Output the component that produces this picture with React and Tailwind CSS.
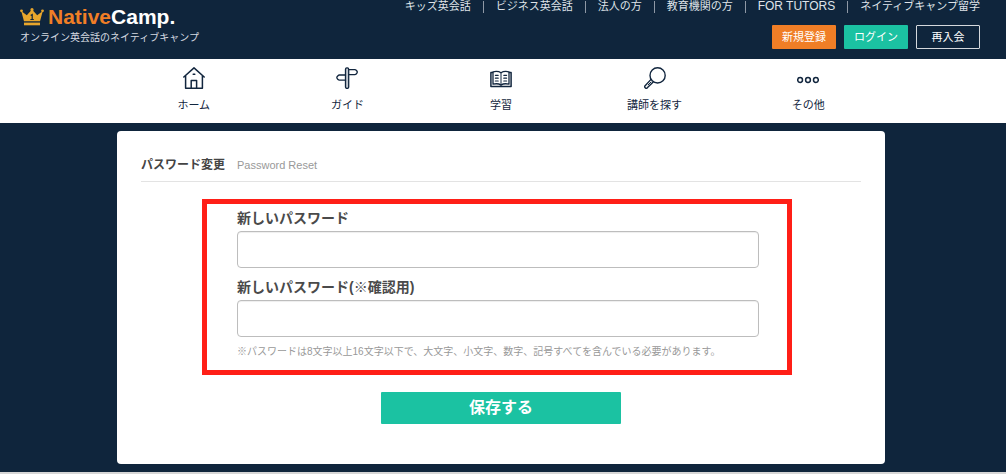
import React from "react";

const topLinks = [
  { text: "キッズ英会話" },
  { text: "ビジネス英会話" },
  { text: "法人の方" },
  { text: "教育機関の方" },
  { text: "FOR TUTORS", size: "text-xs" },
  { text: "ネイティブキャンプ留学" },
];

function Icon({ children }) {
  return (
    <svg
      viewBox="0 0 22 22"
      className="size-[22px]"
      fill="none"
      stroke="currentColor"
      strokeWidth="1.5"
      strokeLinecap="round"
      strokeLinejoin="round"
      aria-hidden="true"
    >
      {children}
    </svg>
  );
}

const navItems = [
  {
    label: "ホーム",
    icon: (
      <Icon>
        <path d="M.8 10 11 .9 21.2 10M2.6 8.8v12.4h16.8V8.8M8.2 21v-7.4h5.4V21" />
        <path d="M10.2 7.2h1.6" />
      </Icon>
    ),
  },
  {
    label: "ガイド",
    icon: (
      <Icon>
        <rect x="9.5" y="0.8" width="3.2" height="20.6" rx="1.4" fill="#c3c9d1" strokeWidth="1.3" />
        <path d="M12.7 2.6h6.2c1 0 2.4 1.6 2.4 2.5s-1.4 2.5-2.4 2.5h-6.2M9.5 8H3.4C2.4 8 .8 9.700.8 10.6s1.6 2.6 2.6 2.6h6.1" strokeWidth="1.3" />
      </Icon>
    ),
  },
  {
    label: "学習",
    icon: (
      <Icon>
        <path d="M2.6 5.4H.9v14h20.2v-14h-1.7" />
        <path d="M11 5.8C9 4.400 6 4.200 3 4.800v12.400c3-.7 6-.5 8 .9 2-1.400 5-1.600 8-.9V4.800c-3-.6-6-.4-8 1Z" strokeWidth="1.3" />
        <path d="M11 6v12" strokeWidth="1" />
        <path d="M5.4 8.300h2.800M5.400 11.200h2.800M5.400 14h2.800M13.800 8.300h2.800M13.800 11.200h2.800M13.800 14h2.800" strokeWidth="1.2" />
      </Icon>
    ),
  },
  {
    label: "講師を探す",
    icon: (
      <Icon>
        <circle cx="13.6" cy="8.4" r="7.6" strokeWidth="1.4" />
        <path d="M6.8 12.600.9 19c-.9 1.200 1 3 2.100 2.100l6.200-6.200" strokeWidth="1.4" />
        <path d="M6.9 15.100 4.200 17.800" strokeWidth="1" />
      </Icon>
    ),
  },
  {
    label: "その他",
    icon: (
      <Icon>
        <circle cx="3.1" cy="13" r="2.4" />
        <circle cx="11" cy="13" r="2.4" />
        <circle cx="18.9" cy="13" r="2.4" />
      </Icon>
    ),
  },
];

function Crown() {
  return (
    <svg viewBox="0 0 24 18" className="h-[18px] w-6" fill="#e8a62c" aria-hidden="true">
      <path d="M1.2 3 4 13.3h16L22.8 3l-5.6 4.2L12 1.6 6.8 7.2Z" />
      <path d="M4 14.6h16v2.7H4z" />
      <circle cx="1.5" cy="2.8" r="1.4" />
      <circle cx="12" cy="1.7" r="1.6" />
      <circle cx="22.5" cy="2.8" r="1.4" />
      <path d="M10.7 7.6 12.2 6.600v4.800M10.400 11.500h3.400" fill="none" stroke="#0f253c" strokeWidth="1.2" />
    </svg>
  );
}

function Field({ id, label }) {
  return (
    <div>
      <label htmlFor={id} className="block text-sm leading-[26px] font-bold text-[#4a4a4a]">
        {label}
      </label>
      <input
        id={id}
        type="password"
        className="block h-[37px] w-full rounded border border-[#bdbdbd] bg-white px-3 shadow-[inset_0_1px_1px_rgba(0,0,0,0.07)] outline-none"
      />
    </div>
  );
}

export default function App() {
  return (
    <div className="bg-[#0f253c] [font-family:'Liberation_Sans','Noto_Sans_CJK_JP',sans-serif] text-[11px]">
      <header className="flex justify-between pr-[26px] pb-2.5 pl-5 text-white">
        <a href="#" className="flex flex-col pt-[7px]">
          <span className="flex h-5 items-center gap-1 text-[21px] font-bold">
            <Crown />
            <span>
              <span className="text-[#f07e26]">Native</span>Camp.
            </span>
          </span>
          <span className="text-[10px] leading-[22px] text-[#d5dae0]">
            オンライン英会話のネイティブキャンプ
          </span>
        </a>
        <div className="flex flex-col items-end gap-3">
          <nav className="flex h-[13px] items-start text-[#dfe3e8]">
            {topLinks.map(({ text, size }, i) => (
              <React.Fragment key={text}>
                {i > 0 && <span className="mx-3 h-3 w-px self-end bg-[#8e98a5]" />}
                <a href="#" className={size}>
                  <span className="block leading-3">{text}</span>
                </a>
              </React.Fragment>
            ))}
          </nav>
          <div className="flex gap-2">
            <button className="h-6 w-16 rounded-[1px] bg-[#f07e26]">新規登録</button>
            <button className="h-6 w-16 rounded-[1px] bg-[#1bc2a2]">ログイン</button>
            <button className="h-6 w-16 rounded-[1px] border border-[#d5d8dc]">再入会</button>
          </div>
        </div>
      </header>

      <nav className="bg-white pr-1 text-[#12263e]">
        <ul className="mx-auto grid h-16 max-w-3xl grid-cols-5">
          {navItems.map((item) => (
            <li key={item.label}>
              <a href="#" className="flex flex-col items-center gap-1.5 pt-2">
                {item.icon}
                <span className="leading-5">{item.label}</span>
              </a>
            </li>
          ))}
        </ul>
      </nav>

      <main className="py-2 pr-1">
        <section className="mx-auto max-w-3xl rounded bg-white px-6 pt-6 pb-10">
          <h1 className="flex items-center gap-3 border-b border-[#e3e3e3] pb-1.5 text-xs leading-5 font-bold text-[#444]">
            パスワード変更
            <small className="text-[11px] font-normal text-[#999]">Password Reset</small>
          </h1>
          <form onSubmit={(e) => e.preventDefault()}>
            <div className="mt-[17px] mr-[69px] ml-[61px] flex flex-col gap-1.5 border-5 border-[#ff1f17] pt-px pr-7 pb-[9px] pl-[30px]">
              <Field id="new-password" label="新しいパスワード" />
              <Field id="confirm-password" label="新しいパスワード(※確認用)" />
              <p className="text-[10px] leading-[18px] text-[#999]">
                ※パスワードは8文字以上16文字以下で、大文字、小文字、数字、記号すべてを含んでいる必要があります。
              </p>
            </div>
            <button
              type="submit"
              className="mx-auto mt-[17px] block h-8 w-60 rounded-[1px] bg-[#1bc2a2] text-base font-bold text-white"
            >
              保存する
            </button>
          </form>
        </section>
      </main>
      <footer className="h-0.5 bg-[#d6d6d6]" />
    </div>
  );
}
